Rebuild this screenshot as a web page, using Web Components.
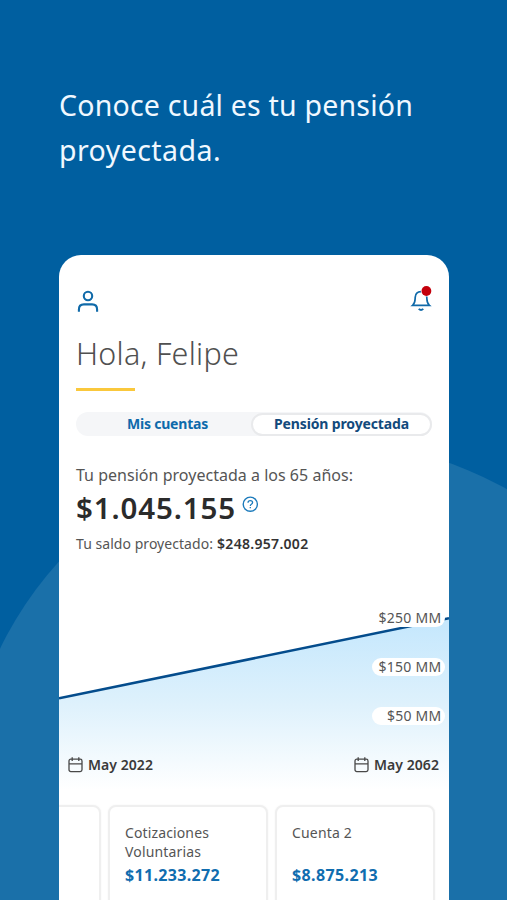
<!DOCTYPE html>
<html lang="es"><head><meta charset="utf-8"><title>Pensión proyectada</title>
<style>html,body{margin:0;padding:0}body{width:507px;height:900px;overflow:hidden;font-family:"Noto Sans","Open Sans",sans-serif}</style></head>
<body>
<promo-screen>
  <promo-title slot="title"></promo-title>
  <phone-card>
    <top-bar></top-bar>
    <user-greeting></user-greeting>
    <tab-switch></tab-switch>
    <pension-summary></pension-summary>
    <pension-chart></pension-chart>
    <account-list>
      <account-card></account-card>
      <account-card amount="$11.233.272" aw="95"><fit-text w="84">Cotizaciones</fit-text><fit-text w="76">Voluntarias</fit-text></account-card>
      <account-card amount="$8.875.213" aw="86"><fit-text w="60">Cuenta 2</fit-text></account-card>
    </account-list>
  </phone-card>
</promo-screen>
<script>
const define = (name, html, init) => customElements.define(name, class extends HTMLElement {
  connectedCallback() {
    if (this.shadowRoot) return;
    const t = document.createElement('template');
    t.innerHTML = html;
    this.attachShadow({mode: 'open'}).append(t.content.cloneNode(true));
    if (init) init.call(this, this.shadowRoot);
  }
});

define('promo-screen', `<style>
:host{display:block;position:relative;width:507px;height:900px;overflow:hidden;background:#005fa0}
.bg{position:absolute;inset:0}
.col{position:relative;display:flex;flex-direction:column;padding:83px 58px 0 59px}
</style><svg class="bg" width="507" height="900"><circle cx="328.4" cy="806.9" r="364.5" fill="#1a70a9"/></svg>
<div class="col"><slot name="title"></slot><slot></slot></div>`);

define('promo-title', `<style>
:host{display:flex;flex-direction:column;align-items:flex-start;height:172px;color:#f0f8ff;font-size:28.5px;line-height:45px}
</style><fit-text w="354">Conoce cuál es tu pensión</fit-text><fit-text w="162">proyectada.</fit-text>`);

define('phone-card', `<style>
:host{display:flex;flex-direction:column;width:390px;height:645px;background:#fff;border-radius:22px 22px 0 0;overflow:hidden}
::slotted(*){flex:none}
</style><slot></slot>`);

define('top-bar', `<style>
:host{display:flex;justify-content:space-between;padding:31px 16px 0 18px;height:47px}
svg{display:block;fill:none;stroke:#106aa9;stroke-width:2.1;stroke-linecap:butt}
</style>
<svg width="22" height="30"><circle cx="11" cy="10" r="4.2"/><path d="M1.9 25.8V23.4Q1.9 18.4 6.9 18.4H15.1Q20.1 18.4 20.1 23.4V25.8"/></svg>
<svg width="24" height="30"><path stroke-width="1.7" d="M3.6 19.3C6.5 16.8 6 14 6.2 11.4C6.4 8 8.6 5.6 12 5.6C15.4 5.6 17.6 8 17.8 11.4C18 14 17.5 16.8 20.4 19.3Z"/><path stroke-width="1.9" d="M9.7 22.9Q12 25 14.3 22.9"/><circle cx="17.4" cy="5" r="5.6" fill="#fff" stroke="none"/><circle cx="17.4" cy="5" r="4.9" fill="#c4000c" stroke="none"/></svg>`);

define('user-greeting', `<style>
:host{display:flex;flex-direction:column;align-items:flex-start;padding:0 17px;height:79px;font-size:30.5px;font-weight:300;line-height:40px;color:#505050}
.bar{width:59px;height:3px;margin-top:15px;background:#fac83c}
</style><fit-text w="163">Hola, Felipe</fit-text><div class="bar"></div>`);

define('tab-switch', `<style>
:host{display:grid;grid-template-columns:175px 181px;margin:0 17px;height:24px;border-radius:12px;background:#f5f6f8;font-size:14px;font-weight:700;color:#0d6aab}
div{display:flex;align-items:center;justify-content:center;line-height:22px}
.off{padding-left:8px}
.on{box-sizing:border-box;height:23px;border:2px solid #e9eaec;border-radius:12px;background:#fff;color:#124a7c;margin-top:.5px}
</style><div class="off"><fit-text w="81">Mis cuentas</fit-text></div><div class="on"><fit-text w="135">Pensión proyectada</fit-text></div>`);

define('pension-summary', `<style>
:host{display:flex;flex-direction:column;align-items:flex-start;padding:27px 17px 0;height:137px;color:#555}
.lead{font-size:16px;line-height:24px}
.row{display:flex;gap:6px;height:41px;line-height:41px;font-size:29.5px;font-weight:600;color:#2b2b2b}
svg{margin-top:9px;fill:none;stroke:#1b7abb}
.bal{display:flex;gap:4px;font-size:14px;line-height:20px;margin-top:6px}
b{font-weight:600;color:#333}
</style><fit-text class="lead" w="277">Tu pensión proyectada a los 65 años:</fit-text>
<div class="row"><fit-text w="160">$1.045.155</fit-text><svg width="17" height="17"><circle cx="8.3" cy="8.2" r="7.1" stroke-width="1.4"/><path stroke-width="1.3" d="M6 6.7Q6.1 4.6 8.3 4.6Q10.6 4.6 10.6 6.5Q10.6 7.5 9.4 8.2Q8.3 8.8 8.3 9.9M8.3 11V12.3"/></svg></div>
<div class="bal"><fit-text w="137">Tu saldo proyectado:</fit-text><b><fit-text w="91.5">$248.957.002</fit-text></b></div>`);

define('pension-chart', `<style>
:host{display:block;position:relative;height:199px}
.plot{position:absolute;inset:0}
.scale{position:absolute;right:4px;top:9px;display:grid;gap:31px}
.pill{box-sizing:border-box;width:73px;height:18px;line-height:17px;border-radius:9px;background:#fff;padding-right:3.5px;display:flex;justify-content:flex-end;font-size:14px;color:#555}
.dates{position:absolute;left:9px;right:10px;top:155px;display:flex;justify-content:space-between}
.date{display:flex;align-items:center;gap:4px;line-height:20px;font-size:14px;font-weight:600;color:#3a3a3a}
</style><svg class="plot" width="390" height="199"><defs><linearGradient id="g" gradientUnits="userSpaceOnUse" x1="0" y1="18" x2="0" y2="190"><stop stop-color="#c4e7fd"/><stop offset=".5" stop-color="#def1fc"/><stop offset="1" stop-color="#fff"/></linearGradient></defs><path d="M0 98.5L390 18.5V199H0Z" fill="url(#g)"/><path d="M0 98.3L390 18.3" stroke="#044c8c" stroke-width="2.5"/></svg>
<div class="scale"><div class="pill"><fit-text w="63">$250 MM</fit-text></div><div class="pill"><fit-text w="63">$150 MM</fit-text></div><div class="pill"><fit-text w="54.5">$50 MM</fit-text></div></div>
<div class="dates"><div class="date"><cal-icon></cal-icon><fit-text w="65">May 2022</fit-text></div><div class="date"><cal-icon></cal-icon><fit-text w="65">May 2062</fit-text></div></div>`);

define('cal-icon', `<style>:host{display:block;width:16px;height:17px}svg{display:block;fill:none;stroke:#484848;stroke-width:1.3}</style>
<svg width="16" height="16"><rect x="1" y="2.2" width="13" height="12.4" rx="1.8"/><path d="M1 6.8H14M4.2 .3V4M10.8 .3V4"/></svg>`);

define('account-list', `<style>
:host{display:flex;gap:7px;margin-left:-118px;padding-top:6px;height:200px}
</style><slot></slot>`);

define('account-card', `<style>
:host{box-sizing:border-box;flex:0 0 160px;height:200px;border:2px solid #efefef;border-radius:8px;background:#fff;padding:16px 15px 0;box-shadow:0 0 2px #0000000d;font-size:14px;line-height:19px;color:#555}
.name{display:flex;flex-direction:column;align-items:flex-start;height:38px}
.amount{font-size:16px;font-weight:700;line-height:26px;margin-top:1px;color:#106daf}
</style><div class="name"><slot></slot></div><div class="amount"></div>`, function (root) {
  const amount = this.getAttribute('amount');
  if (!amount) return;
  const el = document.createElement('fit-text');
  el.setAttribute('w', this.getAttribute('aw'));
  el.textContent = amount;
  root.querySelector('.amount').append(el);
});

// Tracks a single line of text so that it spans w pixels.
define('fit-text', `<style>:host{display:block;white-space:nowrap;width:max-content}</style><span><slot></slot></span>`, function (root) {
  const span = root.querySelector('span');
  const gap = this.getAttribute('w') - span.getBoundingClientRect().width;
  span.style.letterSpacing = (gap / this.textContent.length).toFixed(3) + 'px';
});
</script>
</body></html>
